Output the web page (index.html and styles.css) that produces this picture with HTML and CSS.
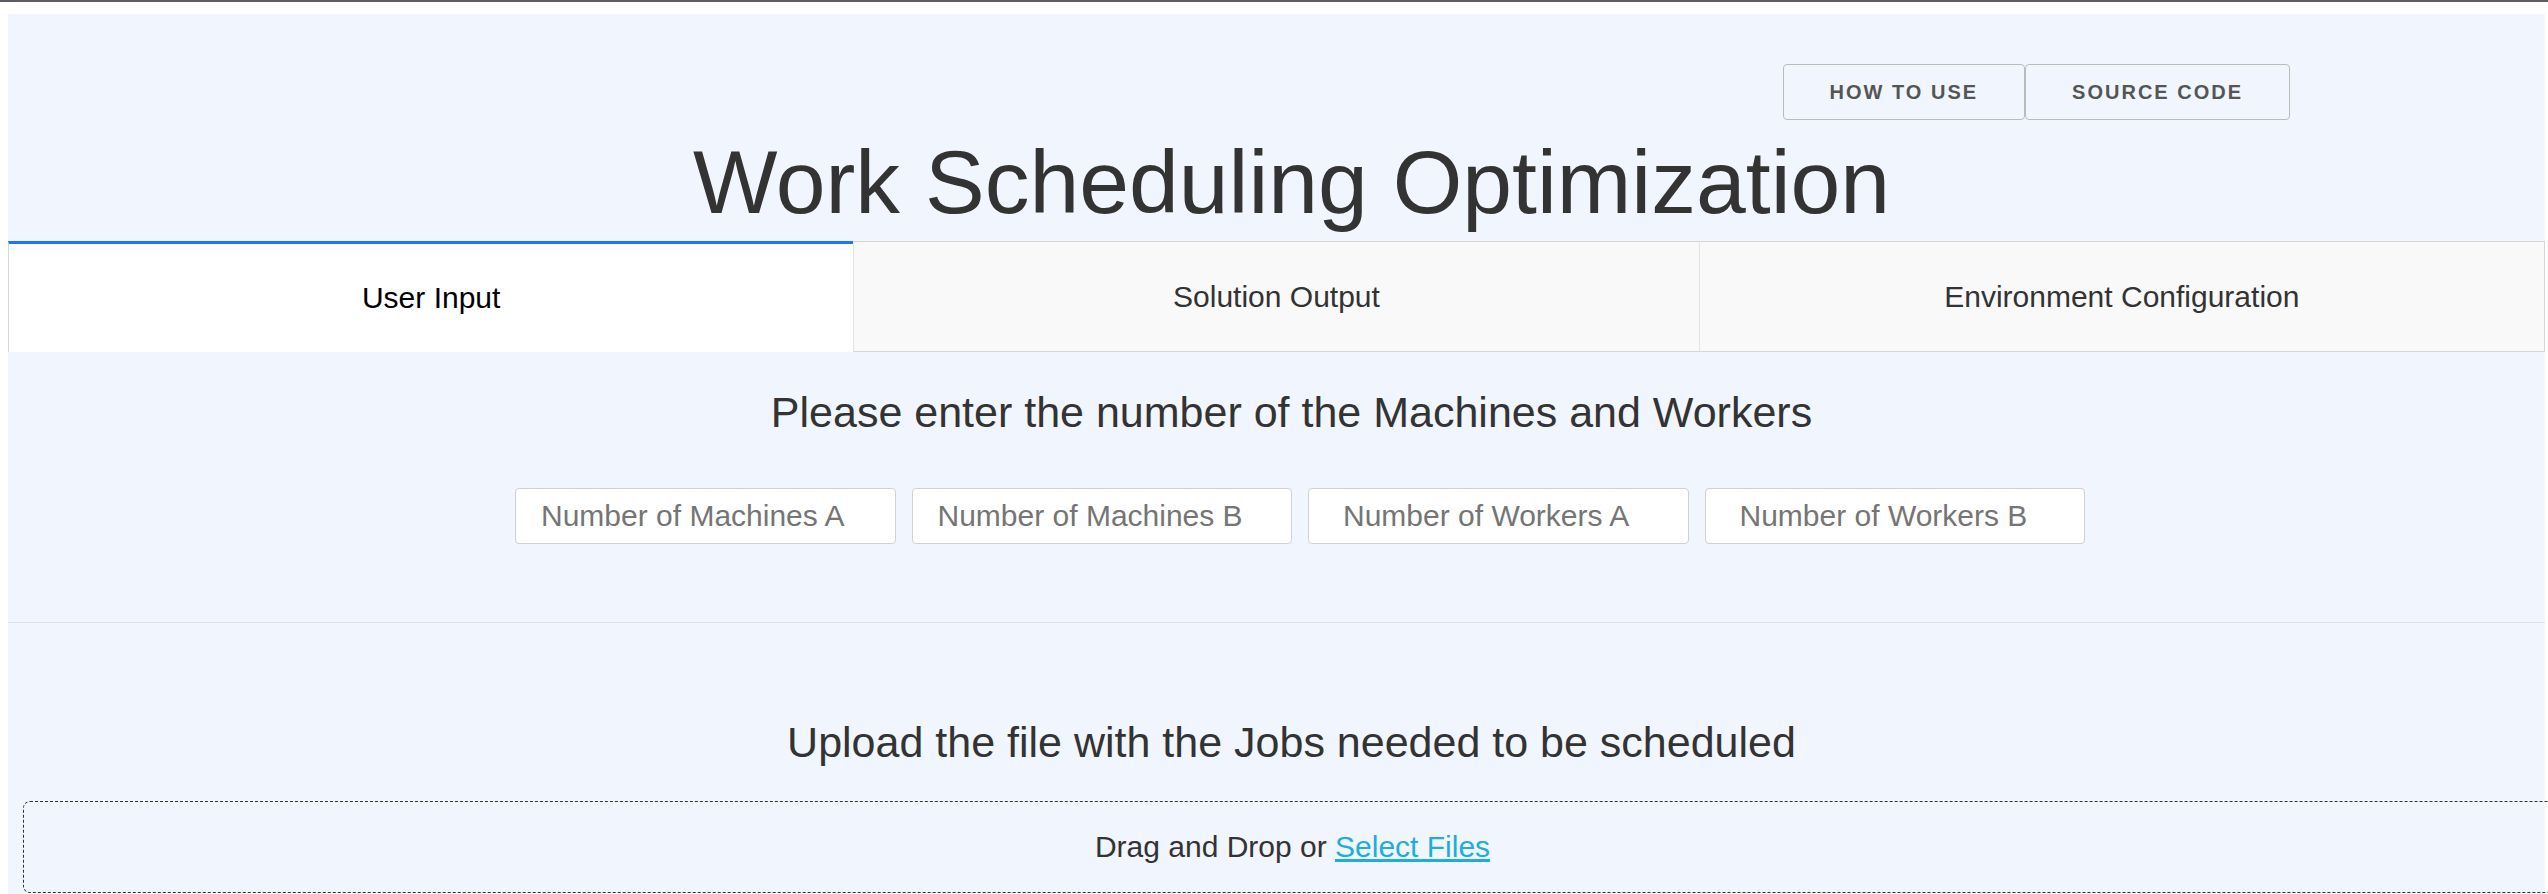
FILE: index.html
```html
<!DOCTYPE html>
<html lang="en">
<head>
<meta charset="utf-8">
<title>Work Scheduling Optimization</title>
<link rel="stylesheet" href="styles.css">
</head>
<body>
<div class="topbar"></div>
<div class="page">
  <div class="actions">
    <button class="btn">HOW TO USE</button>
    <button class="btn">SOURCE CODE</button>
  </div>
  <h1 class="title">Work Scheduling Optimization</h1>
  <div class="tabs">
    <div class="tab tab--selected">User Input</div>
    <div class="tab">Solution Output</div>
    <div class="tab">Environment Configuration</div>
  </div>
  <h2 class="heading heading--first">Please enter the number of the Machines and Workers</h2>
  <div class="inputs">
    <input class="field" type="text" placeholder="Number of Machines A">
    <input class="field" type="text" placeholder="Number of Machines B">
    <input class="field field--wide" type="text" placeholder="Number of Workers A">
    <input class="field field--wide" type="text" placeholder="Number of Workers B">
  </div>
  <div class="rule"></div>
  <h2 class="heading heading--second">Upload the file with the Jobs needed to be scheduled</h2>
  <div class="dropzone">Drag and Drop or <a class="link" href="#">Select Files</a></div>
</div>
</body>
</html>
```

FILE: styles.css
```css
html, body {
  overflow: hidden;
}
body {
  margin: 0;
  background: #ffffff;
  font-family: "Liberation Sans", Arial, Helvetica, sans-serif;
  color: #333333;
}
.topbar {
  height: 2px;
  background: #5e5e62;
}
.page {
  margin: 12px 3px 0 8px;
  background: #f0f5fe;
  min-height: 900px;
  padding-bottom: 20px;
}
.actions {
  display: flex;
  justify-content: flex-end;
  padding: 50px 255px 0 0;
}
.btn {
  box-sizing: border-box;
  height: 56px;
  padding: 0 46px;
  margin: 0;
  background: transparent;
  border: 1px solid #bbbbbb;
  border-radius: 4px;
  font-family: "Liberation Sans", Arial, sans-serif;
  font-size: 20px;
  font-weight: bold;
  letter-spacing: 2px;
  color: #555555;
  line-height: 54px;
}
.title {
  margin: 12px -15px 0 15px;
  font-size: 89.5px;
  line-height: 100px;
  font-weight: normal;
  text-align: center;
  color: #333333;
}
.tabs {
  display: flex;
  margin-top: 9px;
}
.tab {
  box-sizing: border-box;
  flex: 1 1 0;
  height: 111px;
  display: flex;
  align-items: center;
  justify-content: center;
  background: #f9f9f9;
  border-top: 1px solid #d6d6d6;
  border-bottom: 1px solid #d6d6d6;
  border-left: 1px solid #e4e4e4;
  font-size: 30px;
  color: #333333;
}
.tab:last-child {
  border-right: 1px solid #d6d6d6;
}
.tab--selected {
  background: #ffffff;
  color: #000000;
  border-top: 3px solid #1975fa;
  border-left: 1px solid #d6d6d6;
  border-bottom: none;
  padding-bottom: 1px;
}
.heading {
  margin: 0 -15px 0 15px;
  font-size: 43px;
  line-height: 43px;
  font-weight: normal;
  text-align: center;
  color: #333333;
}
.heading--first {
  margin-top: 39px;
}
.heading--second {
  margin-top: 98px;
}
.inputs {
  display: flex;
  justify-content: center;
  gap: 16px;
  margin-top: 54px;
  padding-left: 47px;
}
.field {
  box-sizing: border-box;
  width: 380.5px;
  height: 56px;
  padding: 0 10px 0 25px;
  margin: 0;
  background: #ffffff;
  border: 1px solid #d1d1d1;
  border-radius: 4px;
  font-family: "Liberation Sans", Arial, sans-serif;
  font-size: 30px;
  color: #333333;
}
.field--wide {
  padding-left: 34px;
}
.field::placeholder {
  color: #757575;
  opacity: 1;
}
.rule {
  margin-top: 78px;
  border-top: 1px solid #dfe3e7;
}
.dropzone {
  box-sizing: content-box;
  width: 100%;
  height: 90px;
  line-height: 90px;
  margin: 37px 0 0 15px;
  border: 1px dashed #333333;
  border-radius: 7px;
  text-align: center;
  font-size: 30px;
  color: #333333;
}
.link {
  color: #1eaedb;
  text-decoration: underline;
}
```
